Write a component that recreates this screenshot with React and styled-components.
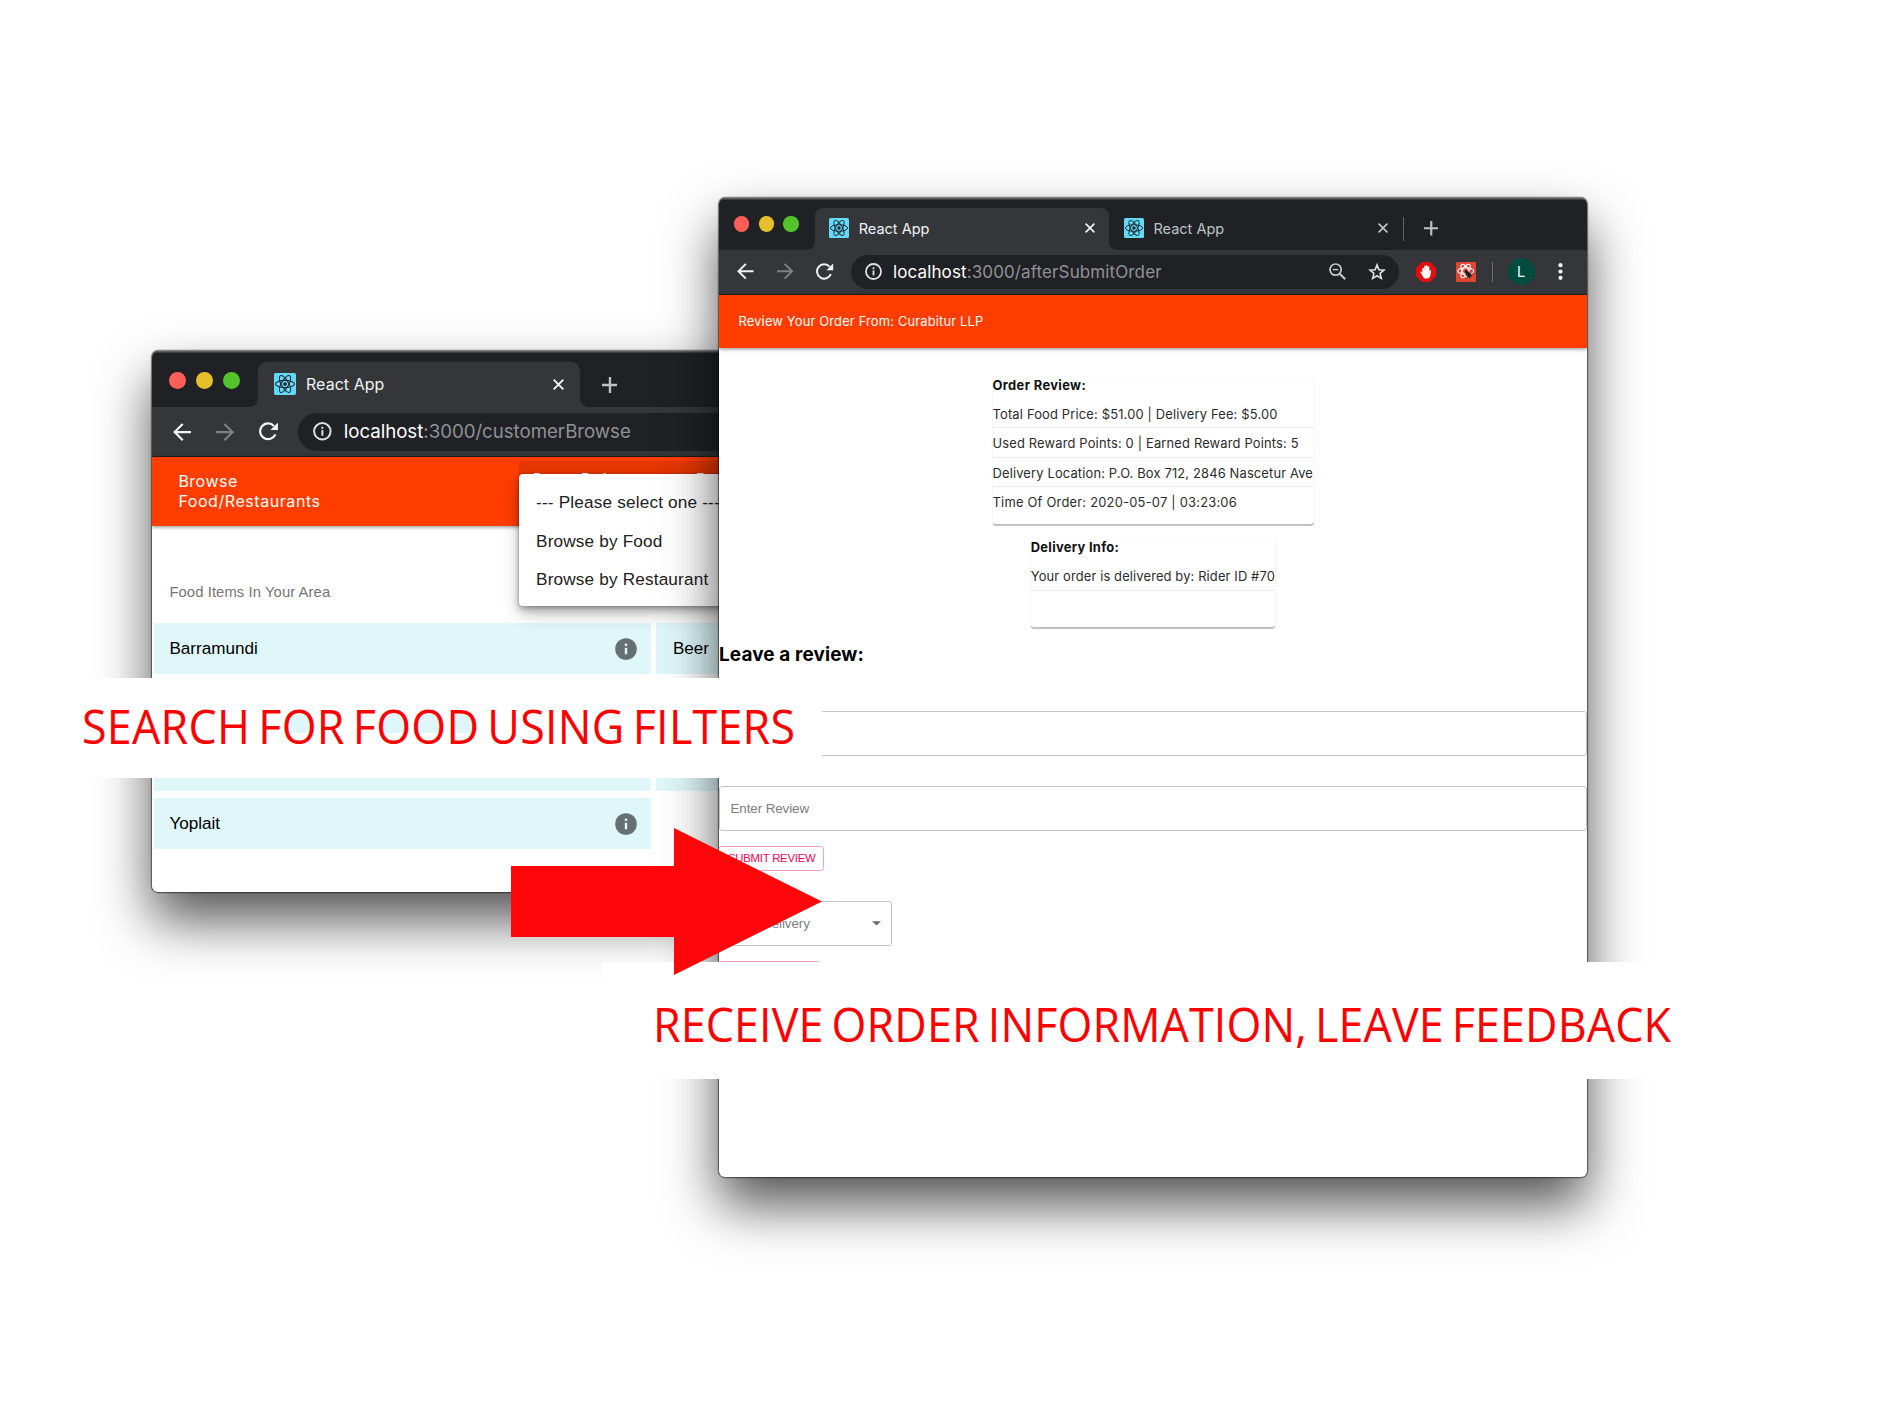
import React, { useLayoutEffect, useRef, useState } from "react";
import styled, { createGlobalStyle, ThemeProvider } from "styled-components";

const Global = createGlobalStyle`
  html, body { margin: 0; padding: 0; background: #fff; }
  *, *::before, *::after { box-sizing: border-box; }
`;

const ui = `Inter, Roboto, "Liberation Sans", sans-serif`;
const helv = `"Liberation Sans", Arial, sans-serif`;

/* size helper: the two browser windows share their chrome at different scales */
const k = (n) => (p) => `${(n * p.theme.s).toFixed(2)}px`;

/* ---------- text that is tracked out to a given width ---------- */
const Line = styled.span`
  display: inline-block;
  white-space: pre;
`;
function Tracked({ w, children }) {
  const ref = useRef(null);
  const [ls, setLs] = useState(0);
  useLayoutEffect(() => {
    const el = ref.current;
    const n = el.textContent.length;
    setLs((w - el.offsetWidth) / Math.max(1, n - 1));
  }, [w]);
  return <Line ref={ref} style={{ letterSpacing: `${ls}px` }}>{children}</Line>;
}

const Canvas = styled.main`
  position: relative;
  width: 1890px;
  height: 1417px;
  overflow: hidden;
  background: #fff;
`;

const Window = styled.section`
  position: absolute;
  isolation: isolate;
  left: ${(p) => p.$x}px;
  top: ${(p) => p.$y}px;
  width: ${(p) => p.$w}px;
  height: ${(p) => p.$h}px;
  border-radius: 6px;
  background: #fff;
  box-shadow: 0 0 0 1.2px rgba(0, 0, 0, 0.45), 0 28px 54px rgba(0, 0, 0, 0.68);
`;
const Clip = styled.div`
  display: flex;
  flex-direction: column;
  height: 100%;
  border-radius: 6px;
  overflow: hidden;
`;

/* ---------- tab strip ---------- */
const Strip = styled.header`
  display: flex;
  flex: none;
  height: ${(p) => p.$h}px;
  background: #202125;
  box-shadow: inset 0 1.5px 0 #5b5e62;
  padding-left: ${k(15.2)};
  font-family: ${ui};
`;
const Lights = styled.div`
  display: flex;
  flex: none;
  gap: ${k(9.3)};
  padding-top: ${k(18.8)};
  width: ${k(80.5)};
`;
const Light = styled.i`
  width: ${k(15.3)};
  height: ${k(15.3)};
  border-radius: 50%;
  background: ${(p) => p.$c};
`;
const Tab = styled.div`
  position: relative;
  display: flex;
  flex: none;
  align-items: center;
  width: ${(p) => p.$w}px;
  margin-top: ${k(10)};
  padding: 0 ${k(14.5)} ${k(1)};
  border-radius: ${k(8)} ${k(8)} 0 0;
  background: ${(p) => (p.$active ? "#35363a" : "transparent")};
  color: ${(p) => (p.$active ? "#f1f3f4" : "#bdc1c6")};
  font-size: ${k(14.5)};
  svg { flex: none; display: block; }
  ${(p) => p.$active && `
    &::before, &::after {
      content: "";
      position: absolute;
      bottom: 0;
      width: 8px;
      height: 8px;
    }
    &::before { left: -8px; background: radial-gradient(circle at 0 0, transparent 7.5px, #35363a 8px); }
    &::after { right: -8px; background: radial-gradient(circle at 100% 0, transparent 7.5px, #35363a 8px); }
  `}
`;
const TabTitle = styled.span`
  flex: 1;
  padding-left: ${k(9.5)};
`;
const TabRule = styled.i`
  width: 1px;
  height: ${k(24)};
  margin-top: ${k(19)};
  background: #5f6368;
`;
const NewTab = styled.div`
  padding-top: ${k(23.5)};
  padding-left: ${(p) => p.$gap}px;
  color: #bdc1c6;
  svg { display: block; }
`;

/* ---------- toolbar ---------- */
const Bar = styled.div`
  display: flex;
  flex: none;
  align-items: center;
  height: ${(p) => p.$h}px;
  padding: 0 0 0 ${k(18.3)};
  background: #35363a;
  border-bottom: 1.4px solid #202125;
  font-family: ${ui};
  svg { display: block; flex: none; }
`;
const Nav = styled.div`
  display: flex;
  align-items: center;
  flex: none;
  width: ${k(113.7)};
  gap: ${k(22.8)};
`;
const Omnibox = styled.div`
  display: flex;
  align-items: center;
  flex: none;
  width: ${(p) => p.$w}px;
  height: ${k(34)};
  border-radius: ${k(17)};
  padding: 0 ${k(13)} 0 ${k(14)};
  background: #202125;
  font-size: ${k(17)};
  color: #9aa0a6;
  svg { color: #dfe1e5; }
`;
const Url = styled.span`
  flex: 1;
  padding-left: ${k(11)};
  color: #8f9195;
  b { font-weight: 400; color: #fff; }
`;
const OmniboxTools = styled.div`
  display: flex;
  align-items: center;
  gap: 22px;
`;
const Actions = styled.div`
  display: flex;
  align-items: center;
  gap: 19.5px;
  padding-left: 17.3px;
`;
const Rule = styled.i`
  width: 1px;
  height: 20px;
  margin: 0 -5.2px 0 -3px;
  background: #6b6c70;
`;
const Avatar = styled.span`
  width: 27px;
  height: 27px;
  border-radius: 50%;
  background: #004d40;
  color: #fff;
  font: 14.5px/27px ${ui};
  text-align: center;
  margin-right: 4px;
`;

/* ---------- app content ---------- */
const AppBar = styled.div`
  position: relative;
  z-index: 1;
  display: flex;
  flex: none;
  height: ${(p) => p.$h}px;
  background: #ff3d00;
  color: #fff;
  box-shadow: 0 1px 4px rgba(0, 0, 0, 0.45);
  font-family: ${ui};
`;
const OrderTitle = styled.h1`
  margin: 0;
  padding-left: 19.5px;
  font-size: 12.9px;
  font-weight: 400;
  line-height: 53.5px;
`;
const BrowseTitle = styled.h1`
  margin: 0;
  padding: 14px 0 0 26px;
  width: 366.5px;
  flex: none;
  font-size: 16px;
  font-weight: 400;
  line-height: 20.3px;
`;
const FilterBox = styled.div`
  flex: none;
  width: 163px;
  height: 58px;
  margin-top: 3.5px;
  padding: 8px 14px;
  border-radius: 4px 4px 0 0;
  background: #e73700;
  font: 13.4px/18px ${helv};
  white-space: nowrap;
`;
const Menu = styled.ul`
  position: absolute;
  left: 367px;
  top: 123.2px;
  z-index: 2;
  width: 230px;
  height: 132px;
  margin: 0;
  padding: 8.5px 16.7px;
  list-style: none;
  border-radius: 4px;
  background: #fff;
  box-shadow: 0 4px 6px rgba(0, 0, 0, 0.25), 0 8px 18px rgba(0, 0, 0, 0.24), 0 0 3px rgba(0, 0, 0, 0.3);
  color: #212121;
  font: 17.2px/38.6px ${helv};
`;
const Subheader = styled.h2`
  margin: 0;
  height: 97.8px;
  flex: none;
  padding: 56px 0 0 17px;
  font: 400 14.8px/20px ${helv};
  color: #757575;
`;
const Foods = styled.div`
  display: grid;
  grid-template-columns: 497px 497px;
  grid-auto-rows: 51px;
  gap: 7.3px 5px;
  padding-left: 1.5px;
  font: 17.1px/51px ${helv};
  color: #000;
`;
const Food = styled.div`
  display: flex;
  justify-content: space-between;
  align-items: center;
  padding: 0 14px 0 ${(p) => (p.$first ? 15.5 : 17)}px;
  background: #e0f7fa;
`;

const Body = styled.div`
  display: flex;
  flex-direction: column;
  align-items: flex-start;
  padding-top: 29px;
  font-family: ${ui};
`;
const Card = styled.div`
  align-self: center;
  margin-bottom: 15px;
  width: ${(p) => p.$w}px;
  border-radius: 3px;
  font-size: 12.9px;
  color: #2b2b2b;
  box-shadow: 0 1.2px 1px rgba(0, 0, 0, 0.25), 0 0 2px rgba(0, 0, 0, 0.06);
`;
const CardTitle = styled.h3`
  margin: 0;
  height: 22.3px;
  font-size: 12.9px;
  line-height: 17.5px;
  font-weight: 700;
  color: #111;
`;
const CardRow = styled.div`
  height: ${(p) => (p.$last ? 36.8 : 29.4)}px;
  line-height: 31.8px;
  white-space: nowrap;
  border-bottom: ${(p) => (p.$last ? "0" : "1.3px solid #ececec")};
`;
const ReviewTitle = styled.h2`
  margin: -15px 0 0;
  height: 83.5px;
  font-size: 18.9px;
  font-weight: 700;
  line-height: 55px;
  color: #000;
`;
const Field = styled.div`
  display: flex;
  align-items: center;
  justify-content: space-between;
  width: ${(p) => p.$w};
  height: 45.5px;
  margin-bottom: ${(p) => p.$mb}px;
  padding: 1px 10px 0 10.5px;
  border: 1.3px solid #c4c4c4;
  border-radius: 3px;
  font: 13.4px/20px ${helv};
  color: #7d7d7d;
`;
const PinkButton = styled.button`
  width: ${(p) => p.$w}px;
  height: 24.5px;
  margin: 0 0 30px -1px;
  padding: 0 0 0 9px;
  text-align: left;
  border: 1.2px solid #fa9dba;
  border-radius: 3.5px;
  background: #fff;
  color: #f50057;
  font: 11.3px/20px ${helv};
`;

/* ---------- captions and arrow laid over the windows ---------- */
const Caption = styled.div`
  position: absolute;
  left: ${(p) => p.$x}px;
  top: ${(p) => p.$y}px;
  width: ${(p) => p.$w}px;
  height: ${(p) => p.$h}px;
  padding-left: ${(p) => p.$pad}px;
  background: #fff;
  color: #ff0000;
  font: 47.6px/${(p) => p.$lh}px "Open Sans", "Noto Sans", sans-serif;
  word-spacing: -4px;
`;
const Narrow = styled.div`
  transform: scaleX(0.94);
  transform-origin: 0 0;
`;
const Arrow = styled.svg`
  position: absolute;
  left: 511px;
  top: 828px;
`;
const Show = styled.span`
  background-image: radial-gradient(ellipse 35% 16px at 48% 17px, #dff7fb 96%, transparent 100%);
  background-size: 100% 24px;
  background-position: 0 16px;
  background-repeat: no-repeat;
`;

/* ---------- icons ---------- */
function ReactMark({ size }) {
  return (
    <svg width={size} height={size} viewBox="0 0 20 20">
      <rect width="20" height="20" rx="1.5" fill="#61dafb" />
      <g fill="none" stroke="#20282d" strokeWidth="0.95">
        <ellipse cx="10" cy="10" rx="8.6" ry="3.3" />
        <ellipse cx="10" cy="10" rx="8.6" ry="3.3" transform="rotate(60 10 10)" />
        <ellipse cx="10" cy="10" rx="8.6" ry="3.3" transform="rotate(120 10 10)" />
      </g>
      <circle cx="10" cy="10" r="1.7" fill="#20282d" />
    </svg>
  );
}
const Stroke = ({ size, w = 2, color = "currentColor", d }) => (
  <svg width={size} height={size} viewBox="0 0 16 16" fill="none" stroke={color} strokeWidth={w}>
    <path d={d} />
  </svg>
);
const Cross = ({ s }) => <Stroke size={10 * s} w={2.8} d="M1 1L15 15M15 1L1 15" />;
const Plus = ({ s }) => <Stroke size={14.5 * s} w={2.4} d="M8 0V16M0 8H16" />;
const Back = ({ s }) => <Stroke size={16.5 * s} w={1.9} color="#f1f3f4" d="M8.6 0.8L1.4 8L8.6 15.2M1.4 8H16" />;
const Forward = ({ s }) => <Stroke size={16.5 * s} w={1.9} color="#7f8185" d="M7.4 0.8L14.6 8L7.4 15.2M14.6 8H0" />;
const Reload = ({ s }) => (
  <svg width={18 * s} height={17 * s} viewBox="0 0 18 17">
    <path d="M14.9 11.2A7.2 7.2 0 1 1 13.6 3.6" fill="none" stroke="#f1f3f4" strokeWidth="2" />
    <path d="M17.2 0.4V7.2H10.4Z" fill="#f1f3f4" />
  </svg>
);
const InfoRing = ({ s }) => (
  <svg width={17 * s} height={17 * s} viewBox="0 0 17 17">
    <circle cx="8.5" cy="8.5" r="7.5" fill="none" stroke="currentColor" strokeWidth="1.8" />
    <rect x="7.6" y="7.4" width="1.8" height="5" fill="currentColor" />
    <rect x="7.6" y="4.3" width="1.8" height="1.9" fill="currentColor" />
  </svg>
);
const InfoDot = () => (
  <svg width="22" height="22" viewBox="0 0 22 22">
    <circle cx="11" cy="11" r="10.8" fill="#667073" />
    <rect x="9.8" y="9.8" width="2.4" height="6.4" fill="#e0f7fa" />
    <rect x="9.8" y="5.6" width="2.4" height="2.3" fill="#e0f7fa" />
  </svg>
);
const ZoomOut = () => (
  <svg width="17" height="17" viewBox="0 0 17 17" fill="none" stroke="#c6c8cb" strokeWidth="1.7">
    <circle cx="6.6" cy="6.6" r="5.6" />
    <path d="M3.8 6.6H9.4" strokeWidth="1.4" />
    <path d="M10.7 10.7L16.2 16.2" strokeWidth="2.1" />
  </svg>
);
const Star = () => (
  <svg width="18" height="18" viewBox="0 0 18 18" fill="none" stroke="#dfe1e5" strokeWidth="1.6">
    <path d="M9 1.9L10.9 6.7L16 7.1L12.1 10.4L13.3 15.4L9 12.7L4.7 15.4L5.9 10.4L2 7.1L7.1 6.7Z" />
  </svg>
);
const Blocker = () => (
  <svg width="20" height="20" viewBox="0 0 20 20">
    <path d="M5.9 0H14.1L20 5.9V14.1L14.1 20H5.9L0 14.1V5.9Z" fill="#e40d0d" />
    <path d="M6.3 6.2V11L5.2 9.6Q4.2 9.2 4.4 10.3L7.4 15.2Q8.2 16.4 9.8 16.4H11.4Q13.6 16.2 14.2 14L15.2 8.6Q14.4 7.6 13.7 8.6L13.3 10V4.6Q12.5 3.7 11.8 4.6V8.8L11.6 3.7Q10.7 2.7 10 3.7V8.8L9.8 4Q8.9 3.1 8.2 4.1V9L8 6Q7.1 5.2 6.3 6.2Z" fill="#fff" />
  </svg>
);
const DevTools = () => (
  <svg width="20" height="20" viewBox="0 0 20 20">
    <rect width="20" height="20" rx="1" fill="#e04533" />
    <g fill="none" stroke="#fff" strokeWidth="1.1">
      <ellipse cx="9.6" cy="9" rx="8" ry="3.2" />
      <ellipse cx="9.6" cy="9" rx="7.6" ry="3.2" transform="rotate(60 9.6 9)" />
      <ellipse cx="9.6" cy="9" rx="7.6" ry="3.2" transform="rotate(120 9.6 9)" />
    </g>
    <ellipse cx="12.6" cy="12.8" rx="2.2" ry="3.2" transform="rotate(-35 12.6 12.8)" fill="#1f1f1f" />
    <circle cx="10.2" cy="9.6" r="1.5" fill="#1f1f1f" />
    <path d="M9 13.2L15.6 10.8M10.4 16L16 13.6M13 8.8L13.6 16.6" stroke="#1f1f1f" strokeWidth="0.8" />
  </svg>
);
const Dots = () => (
  <svg width="5" height="17" viewBox="0 0 5 17" fill="#f1f3f4">
    <circle cx="2.5" cy="2.2" r="2.1" />
    <circle cx="2.5" cy="8.5" r="2.1" />
    <circle cx="2.5" cy="14.8" r="2.1" />
  </svg>
);
const Caret = () => (
  <svg width="9" height="5" viewBox="0 0 9 5">
    <path d="M0 0.3H9L4.5 4.6Z" fill="#6b6b6b" />
  </svg>
);

function ChromeTab({ s, w, titleW, active }) {
  return (
    <Tab $w={w} $active={active}>
      <ReactMark size={20 * s} />
      <TabTitle><Tracked w={titleW}>React App</Tracked></TabTitle>
      <Cross s={s} />
    </Tab>
  );
}
const WindowLights = () => (
  <Lights><Light $c="#ff5f57" /><Light $c="#e6c02a" /><Light $c="#53c22b" /></Lights>
);
const NavButtons = ({ s }) => (
  <Nav><Back s={s} /><Forward s={s} /><Reload s={s} /></Nav>
);

function BrowseWindow() {
  const s = 1.1;
  const names = ["Barramundi", "Beer", "", "", "", "", "Yoplait"];
  return (
    <ThemeProvider theme={{ s }}>
      <Window $x={152.4} $y={351.3} $w={800} $h={541}>
        <Clip>
          <Strip $h={56.2}>
            <WindowLights />
            <ChromeTab s={s} w={322.7} titleW={78.5} active />
            <NewTab $gap={21.2}><Plus s={s} /></NewTab>
          </Strip>
          <Bar $h={49.7}>
            <NavButtons s={s} />
            <Omnibox $w={620}>
              <InfoRing s={s} />
              <Url><Tracked w={287}><b>localhost</b>:3000/customerBrowse</Tracked></Url>
            </Omnibox>
          </Bar>
          <AppBar $h={68.5}>
            <BrowseTitle>
              <Tracked w={58.5}>Browse</Tracked><br />
              <Tracked w={141.5}>Food/Restaurants</Tracked>
            </BrowseTitle>
            <FilterBox>Browse Preference</FilterBox>
            <FilterBox>Food</FilterBox>
          </AppBar>
          <Subheader><Tracked w={161}>Food Items In Your Area</Tracked></Subheader>
          <Foods>
            {names.map((name, i) => (
              <Food key={i} $first={i % 2 === 0}>{name}{i % 2 === 0 && <InfoDot />}</Food>
            ))}
          </Foods>
        </Clip>
        <Menu>
          <li><Tracked w={184}>--- Please select one ---</Tracked></li>
          <li><Tracked w={126}>Browse by Food</Tracked></li>
          <li><Tracked w={172}>Browse by Restaurant</Tracked></li>
        </Menu>
      </Window>
    </ThemeProvider>
  );
}

function OrderWindow() {
  return (
    <ThemeProvider theme={{ s: 1 }}>
      <Window $x={719} $y={197.6} $w={868} $h={979}>
        <Clip>
          <Strip $h={52}>
            <WindowLights />
            <ChromeTab s={1} w={294.8} titleW={71} active />
            <ChromeTab s={1} w={293.2} titleW={71} />
            <TabRule />
            <NewTab $gap={20}><Plus s={1} /></NewTab>
          </Strip>
          <Bar $h={45}>
            <NavButtons s={1} />
            <Omnibox $w={548}>
              <InfoRing s={1} />
              <Url><Tracked w={268.5}><b>localhost</b>:3000/afterSubmitOrder</Tracked></Url>
              <OmniboxTools><ZoomOut /><Star /></OmniboxTools>
            </Omnibox>
            <Actions>
              <Blocker /><DevTools /><Rule /><Avatar>L</Avatar><Dots />
            </Actions>
          </Bar>
          <AppBar $h={53}>
            <OrderTitle><Tracked w={245}>Review Your Order From: Curabitur LLP</Tracked></OrderTitle>
          </AppBar>
          <Body>
            <Card $w={321}>
              <CardTitle><Tracked w={93.5}>Order Review:</Tracked></CardTitle>
              <CardRow><Tracked w={285}>Total Food Price: $51.00 | Delivery Fee: $5.00</Tracked></CardRow>
              <CardRow><Tracked w={306}>Used Reward Points: 0 | Earned Reward Points: 5</Tracked></CardRow>
              <CardRow><Tracked w={320}>Delivery Location: P.O. Box 712, 2846 Nascetur Ave</Tracked></CardRow>
              <CardRow $last><Tracked w={244}>Time Of Order: 2020-05-07 | 03:23:06</Tracked></CardRow>
            </Card>
            <Card $w={244.5}>
              <CardTitle><Tracked w={88}>Delivery Info:</Tracked></CardTitle>
              <CardRow><Tracked w={244.5}>Your order is delivered by: Rider ID #70</Tracked></CardRow>
              <CardRow $last />
            </Card>
            <ReviewTitle><Tracked w={145}>Leave a review:</Tracked></ReviewTitle>
            <Field $w="100%" $mb={29.4} />
            <Field $w="100%" $mb={15}><Tracked w={79}>Enter Review</Tracked></Field>
            <PinkButton $w={106}><Tracked w={87.5}>SUBMIT REVIEW</Tracked></PinkButton>
            <Field $w="172.5px" $mb={14.3}><Tracked w={79}>Rate Delivery</Tracked><Caret /></Field>
            <PinkButton $w={103}>SUBMIT RATING</PinkButton>
          </Body>
        </Clip>
      </Window>
    </ThemeProvider>
  );
}

export default function App() {
  return (
    <>
      <Global />
      <Canvas>
        <BrowseWindow />
        <OrderWindow />
        <Caption $x={60} $y={678} $w={762} $h={100} $pad={21.5} $lh={96.5}>
          <Narrow>
            <Tracked w={758.5}>
              SEARCH F<Show>O</Show>R F<Show>O</Show><Show>O</Show><Show>D</Show> USING FILTERS
            </Tracked>
          </Narrow>
        </Caption>
        <Caption $x={602} $y={962} $w={1110} $h={117} $pad={50.5} $lh={124.5}>
          <Narrow>
            <Tracked w={1082.5}>RECEIVE ORDER INFORMATION, LEAVE FEEDBACK</Tracked>
          </Narrow>
        </Caption>
        <Arrow width="312" height="148" viewBox="0 0 312 148">
          <path d="M0 38H163V0L311 73.5L163 147V109H0Z" fill="#ff060a" />
        </Arrow>
      </Canvas>
    </>
  );
}
